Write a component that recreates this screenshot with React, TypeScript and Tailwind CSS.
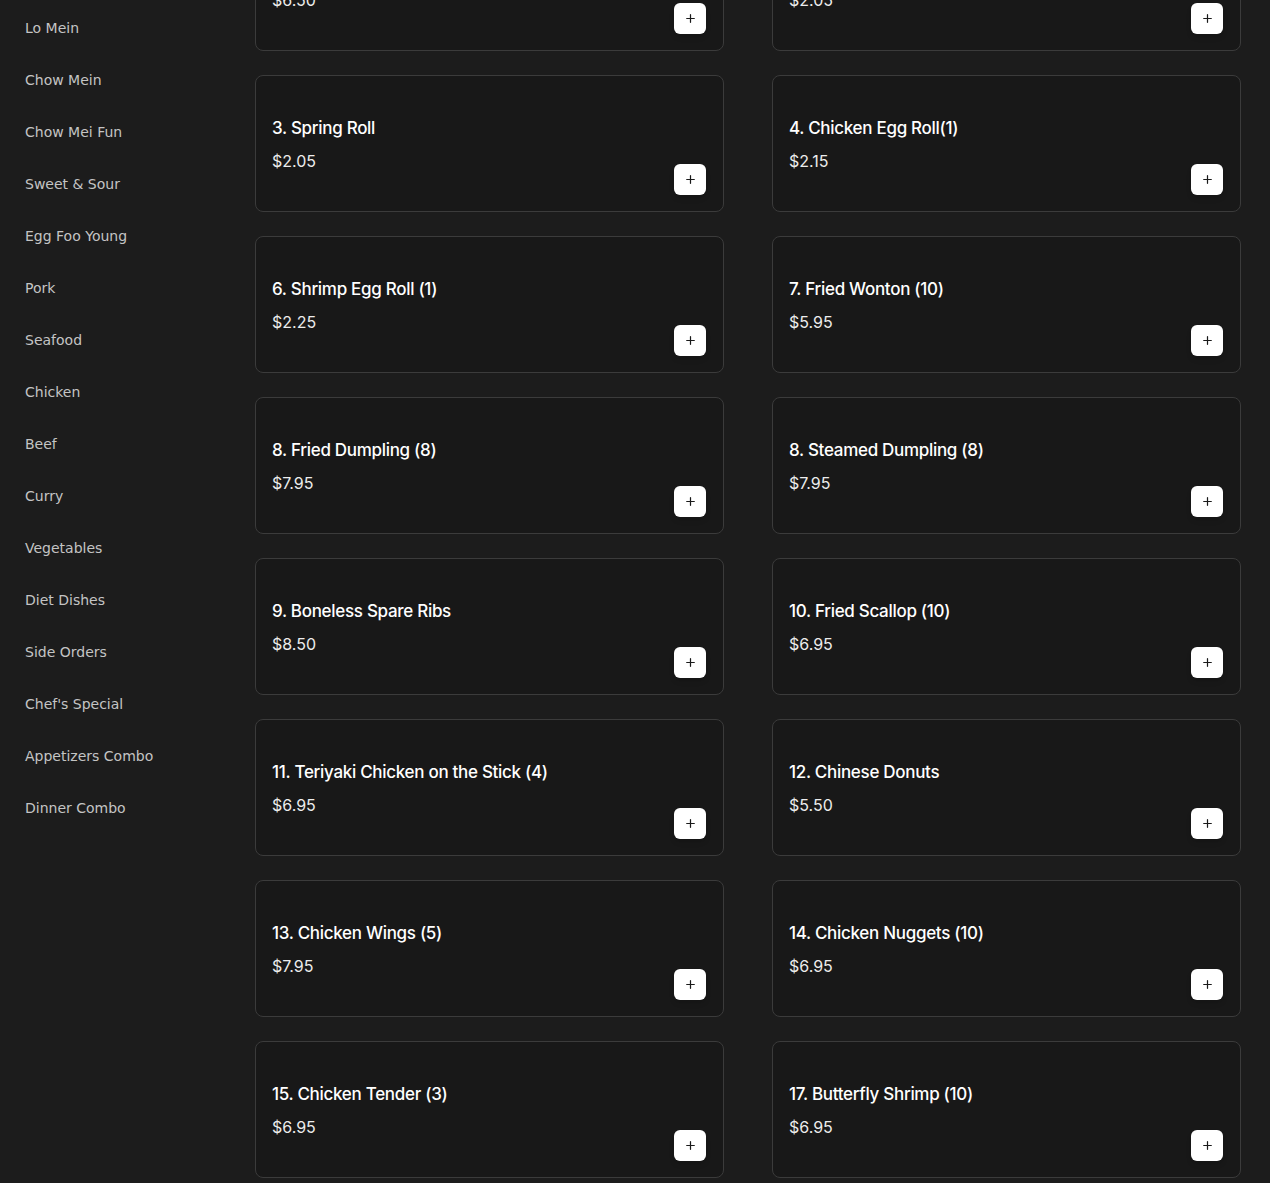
import { Plus } from "lucide-react";

const categories = [
  "Lo Mein",
  "Chow Mein",
  "Chow Mei Fun",
  "Sweet & Sour",
  "Egg Foo Young",
  "Pork",
  "Seafood",
  "Chicken",
  "Beef",
  "Curry",
  "Vegetables",
  "Diet Dishes",
  "Side Orders",
  "Chef's Special",
  "Appetizers Combo",
  "Dinner Combo",
];

const items = [
  { name: "1. Egg Roll", price: "$6.50" },
  { name: "2. Vegetable Roll", price: "$2.05" },
  { name: "3. Spring Roll", price: "$2.05" },
  { name: "4. Chicken Egg Roll(1)", price: "$2.15" },
  { name: "6. Shrimp Egg Roll (1)", price: "$2.25" },
  { name: "7. Fried Wonton (10)", price: "$5.95" },
  { name: "8. Fried Dumpling (8)", price: "$7.95" },
  { name: "8. Steamed Dumpling (8)", price: "$7.95" },
  { name: "9. Boneless Spare Ribs", price: "$8.50" },
  { name: "10. Fried Scallop (10)", price: "$6.95" },
  { name: "11. Teriyaki Chicken on the Stick (4)", price: "$6.95" },
  { name: "12. Chinese Donuts", price: "$5.50" },
  { name: "13. Chicken Wings (5)", price: "$7.95" },
  { name: "14. Chicken Nuggets (10)", price: "$6.95" },
  { name: "15. Chicken Tender (3)", price: "$6.95" },
  { name: "17. Butterfly Shrimp (10)", price: "$6.95" },
];

function MenuCard({ name, price }: { name: string; price: string }) {
  return (
    <div className="h-[137px] rounded-lg border border-[#3b3b3b] bg-[#181818] flex items-end justify-between pl-4 pr-[16px] pb-4">
      <div className="self-start pt-[40px]">
        <h3
          className="text-[17px] leading-6 font-medium text-white tracking-[-0.3px]"
          style={{ fontFamily: "Inter, 'Noto Sans', sans-serif" }}
        >
          {name}
        </h3>
        <p
          className="mt-[9px] text-base leading-6 text-[#ececec]"
          style={{ fontFamily: "Inter, 'Noto Sans', sans-serif" }}
        >
          {price}
        </p>
      </div>
      <button className="w-8 h-[31px] mr-px rounded-md bg-white flex items-center justify-center shadow-md">
        <Plus size={13} strokeWidth={2.25} className="text-[#1a1a1a]" />
      </button>
    </div>
  );
}

export default function App() {
  return (
    <div
      className="h-[1183px] overflow-hidden bg-[#1c1c1c] flex"
      style={{ fontFamily: "'DejaVu Sans', sans-serif" }}
    >
      <aside className="w-[255px] shrink-0 pt-[2px]">
        <ul>
          {categories.map((c) => (
            <li key={c} className="px-[25px] py-4 text-sm leading-5 text-[#c4c4c4]">
              {c}
            </li>
          ))}
        </ul>
      </aside>

      <main className="flex-1 pr-[29px]">
        <div className="-mt-[86px] grid grid-cols-2 gap-x-12 gap-y-6">
          {items.map((it) => (
            <MenuCard key={it.name} name={it.name} price={it.price} />
          ))}
        </div>
      </main>
    </div>
  );
}
